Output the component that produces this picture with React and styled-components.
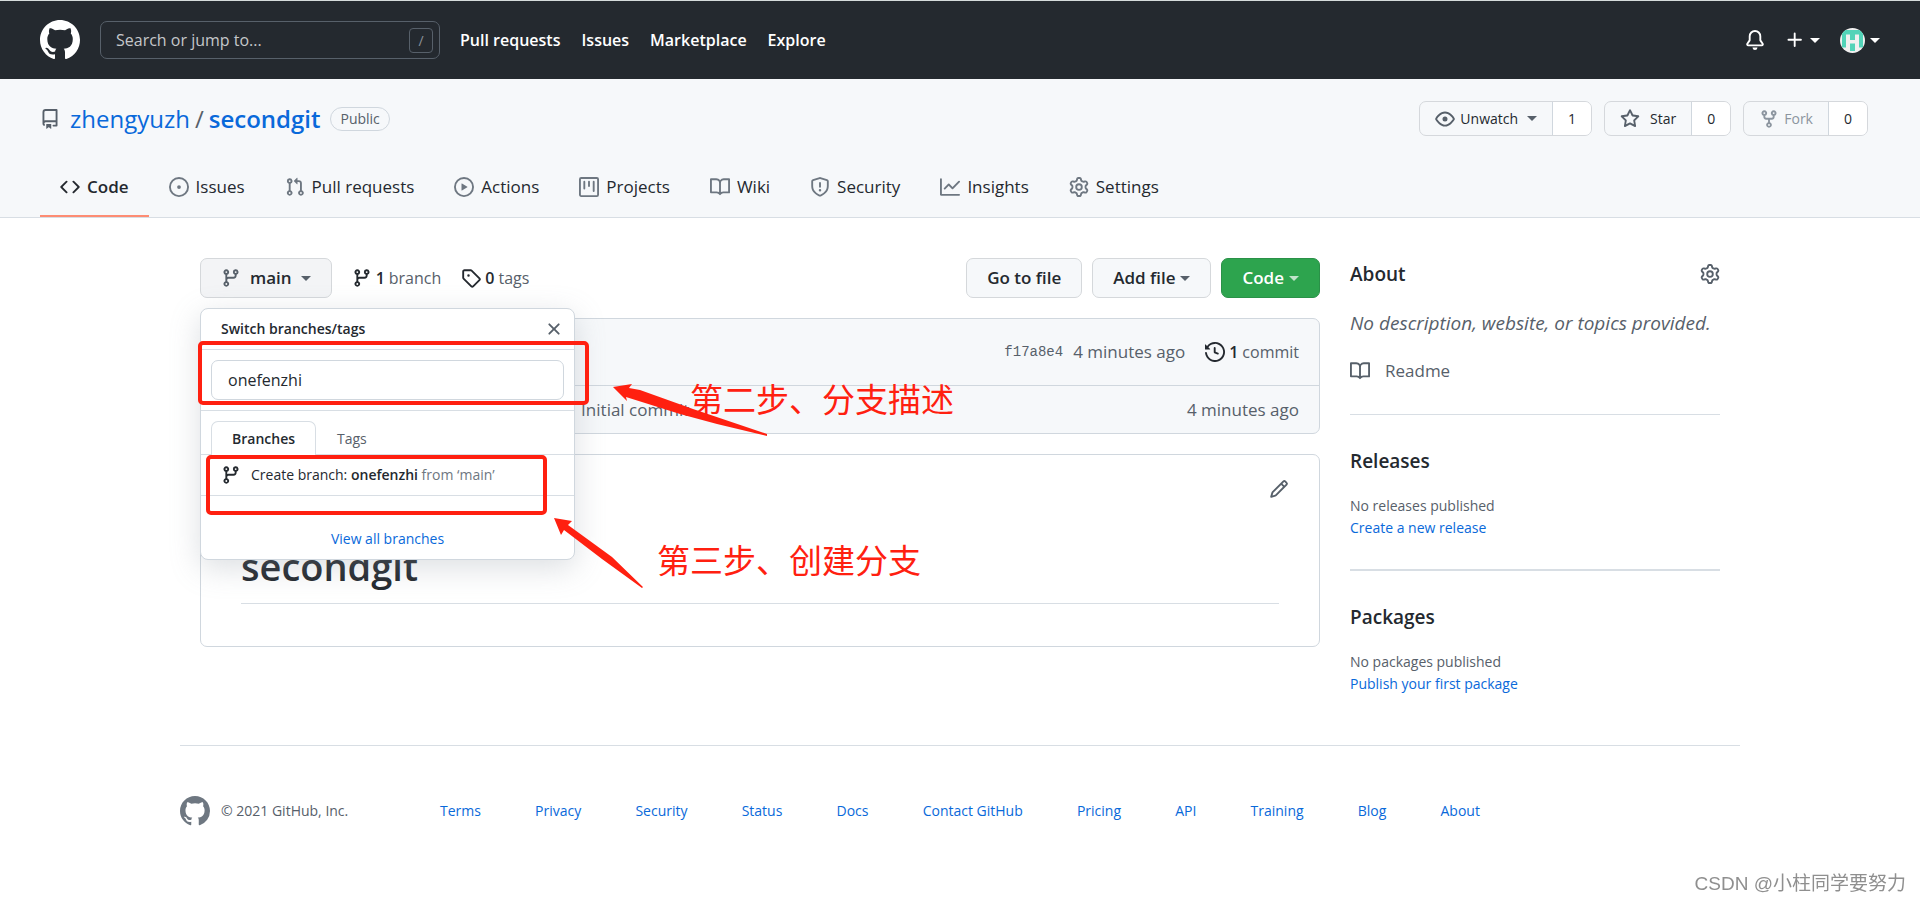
import React, { useState } from "react";
import styled, { createGlobalStyle } from "styled-components";

const paths = {
  github: "M8 0C3.58 0 0 3.58 0 8c0 3.54 2.29 6.53 5.47 7.59.4.07.55-.17.55-.38 0-.19-.01-.82-.01-1.49-2.01.37-2.53-.49-2.69-.94-.09-.23-.48-.94-.82-1.13-.28-.15-.68-.52-.01-.53.63-.01 1.08.58 1.23.82.72 1.21 1.87.87 2.33.66.07-.52.28-.87.51-1.07-1.78-.2-3.64-.89-3.64-3.95 0-.87.31-1.59.82-2.15-.08-.2-.36-1.02.08-2.12 0 0 .67-.21 2.2.82.64-.18 1.32-.27 2-.27.68 0 1.36.09 2 .27 1.53-1.04 2.2-.82 2.2-.82.44 1.1.16 1.92.08 2.12.51.56.82 1.27.82 2.15 0 3.07-1.87 3.75-3.65 3.95.29.25.54.73.54 1.48 0 1.07-.01 1.93-.01 2.2 0 .21.15.46.55.38A8.013 8.013 0 0016 8c0-4.42-3.58-8-8-8z",
  repo: "M2 2.5A2.5 2.5 0 014.5 0h8.75a.75.75 0 01.75.75v12.5a.75.75 0 01-.75.75h-2.5a.75.75 0 110-1.5h1.75v-2h-8a1 1 0 00-.714 1.7.75.75 0 01-1.072 1.05A2.495 2.495 0 012 11.5v-9zm10.5-1V9h-8c-.356 0-.694.074-1 .208V2.5a1 1 0 011-1h8zM5 12.25v3.25a.25.25 0 00.4.2l1.45-1.087a.25.25 0 01.3 0L8.6 15.7a.25.25 0 00.4-.2v-3.25a.25.25 0 00-.25-.25h-3.5a.25.25 0 00-.25.25z",
  code: "M4.72 3.22a.75.75 0 011.06 1.06L2.06 8l3.72 3.72a.75.75 0 11-1.06 1.06L.47 8.53a.75.75 0 010-1.06l4.25-4.25zm6.56 0a.75.75 0 10-1.06 1.06L13.94 8l-3.72 3.72a.75.75 0 101.06 1.06l4.25-4.25a.75.75 0 000-1.06l-4.25-4.25z",
  issue: "M8 9.5a1.5 1.5 0 100-3 1.5 1.5 0 000 3zM8 0a8 8 0 100 16A8 8 0 008 0zM1.5 8a6.5 6.5 0 1113 0 6.5 6.5 0 01-13 0z",
  pull: "M7.177 3.073L9.573.677A.25.25 0 0110 .854v4.792a.25.25 0 01-.427.177L7.177 3.427a.25.25 0 010-.354zM3.75 2.5a.75.75 0 100 1.5.75.75 0 000-1.5zm-2.25.75a2.25 2.25 0 113 2.122v5.256a2.251 2.251 0 11-1.5 0V5.372A2.25 2.25 0 011.5 3.25zM11 2.5h-1V4h1a1 1 0 011 1v5.628a2.251 2.251 0 101.5 0V5A2.5 2.5 0 0011 2.5zm1 10.25a.75.75 0 111.5 0 .75.75 0 01-1.5 0zM3.75 12a.75.75 0 100 1.5.75.75 0 000-1.5z",
  play: "M1.5 8a6.5 6.5 0 1113 0 6.5 6.5 0 01-13 0zM8 0a8 8 0 100 16A8 8 0 008 0zM6.379 5.227A.25.25 0 006 5.442v5.117a.25.25 0 00.379.214l4.264-2.559a.25.25 0 000-.428L6.379 5.227z",
  project: "M1.75 0A1.75 1.75 0 000 1.75v12.5C0 15.216.784 16 1.75 16h12.5A1.75 1.75 0 0016 14.25V1.75A1.75 1.75 0 0014.25 0H1.75zM1.5 1.75a.25.25 0 01.25-.25h12.5a.25.25 0 01.25.25v12.5a.25.25 0 01-.25.25H1.75a.25.25 0 01-.25-.25V1.75zM11.75 3a.75.75 0 00-.75.75v7.5a.75.75 0 001.5 0v-7.5a.75.75 0 00-.75-.75zm-8.25.75a.75.75 0 011.5 0v5.5a.75.75 0 01-1.5 0v-5.5zM8 3a.75.75 0 00-.75.75v3.5a.75.75 0 001.5 0v-3.5A.75.75 0 008 3z",
  book: "M0 1.75A.75.75 0 01.75 1h4.253c1.227 0 2.317.59 3 1.501A3.744 3.744 0 0111.006 1h4.245a.75.75 0 01.75.75v10.5a.75.75 0 01-.75.75h-4.507a2.25 2.25 0 00-1.591.659l-.622.621a.75.75 0 01-1.06 0l-.622-.621A2.25 2.25 0 005.258 13H.75a.75.75 0 01-.75-.75V1.75zm8.755 3a2.25 2.25 0 012.25-2.25H14.5v9h-3.757c-.71 0-1.4.201-1.992.572l.004-7.322zm-1.504 7.324l.004-5.073-.002-2.253A2.25 2.25 0 005.003 2.5H1.5v9h3.757a3.75 3.75 0 011.994.574z",
  shield: "M7.467.133a1.75 1.75 0 011.066 0l5.25 1.68A1.75 1.75 0 0115 3.48V7c0 1.566-.32 3.182-1.303 4.682-.983 1.498-2.585 2.813-5.032 3.855a1.7 1.7 0 01-1.33 0c-2.447-1.042-4.049-2.357-5.032-3.855C1.32 10.182 1 8.566 1 7V3.48a1.75 1.75 0 011.217-1.667l5.25-1.68zm.61 1.429a.25.25 0 00-.153 0l-5.25 1.68a.25.25 0 00-.174.238V7c0 1.358.275 2.666 1.057 3.86.784 1.194 2.121 2.34 4.366 3.297a.2.2 0 00.154 0c2.245-.956 3.582-2.104 4.366-3.298C13.225 9.666 13.5 8.36 13.5 7V3.48a.25.25 0 00-.174-.237l-5.25-1.68zM9 10.5a1 1 0 11-2 0 1 1 0 012 0zm-.25-5.75a.75.75 0 10-1.5 0v3a.75.75 0 001.5 0v-3z",
  graph: "M1.5 1.75a.75.75 0 00-1.5 0v12.5c0 .414.336.75.75.75h14.5a.75.75 0 000-1.5H1.5V1.75zm14.28 2.53a.75.75 0 00-1.06-1.06L10 7.94 7.53 5.47a.75.75 0 00-1.06 0L3.22 8.72a.75.75 0 001.06 1.06L7 7.06l2.47 2.47a.75.75 0 001.06 0l5.25-5.25z",
  gear: "M7.429 1.525a6.593 6.593 0 011.142 0c.036.003.108.036.137.146l.289 1.105c.147.56.55.967.997 1.189.174.086.341.183.501.29.417.278.97.423 1.53.27l1.102-.303c.11-.03.175.016.195.046.219.31.41.641.573.989.014.031.022.11-.059.19l-.815.806c-.411.406-.562.957-.53 1.456a4.588 4.588 0 010 .582c-.032.499.119 1.05.53 1.456l.815.806c.08.08.073.159.059.19a6.494 6.494 0 01-.573.99c-.02.029-.086.074-.195.045l-1.103-.303c-.559-.153-1.112-.008-1.529.27-.16.107-.327.204-.5.29-.449.222-.851.628-.998 1.189l-.289 1.105c-.029.11-.101.143-.137.146a6.613 6.613 0 01-1.142 0c-.036-.003-.108-.037-.137-.146l-.289-1.105c-.147-.56-.55-.967-.997-1.189a4.502 4.502 0 01-.501-.29c-.417-.278-.97-.423-1.53-.27l-1.102.303c-.11.03-.175-.016-.195-.046a6.492 6.492 0 01-.573-.989c-.014-.031-.022-.11.059-.19l.815-.806c.411-.406.562-.957.53-1.456a4.587 4.587 0 010-.582c.032-.499-.119-1.05-.53-1.456l-.815-.806c-.08-.08-.073-.159-.059-.19a6.44 6.44 0 01.573-.99c.02-.029.086-.075.195-.045l1.103.303c.559.153 1.112.008 1.529-.27.16-.107.327-.204.5-.29.449-.222.851-.628.998-1.189l.289-1.105c.029-.11.101-.143.137-.146zM8 0c-.236 0-.47.01-.701.03-.743.065-1.29.615-1.458 1.261l-.29 1.106c-.017.066-.078.158-.211.224a5.994 5.994 0 00-.668.386c-.123.082-.233.09-.3.071L3.27 2.776c-.644-.177-1.392.02-1.82.63a7.977 7.977 0 00-.704 1.217c-.315.675-.111 1.422.363 1.891l.815.806c.05.048.098.147.088.294a6.084 6.084 0 000 .772c.01.147-.038.246-.088.294l-.815.806c-.474.469-.678 1.216-.363 1.891.2.428.436.835.704 1.218.428.609 1.176.806 1.82.63l1.103-.303c.066-.019.176-.011.299.071.213.143.436.272.668.386.133.066.194.158.212.224l.289 1.106c.169.646.715 1.196 1.458 1.26a8.094 8.094 0 001.402 0c.743-.064 1.29-.614 1.458-1.26l.29-1.106c.017-.066.078-.158.211-.224a5.98 5.98 0 00.668-.386c.123-.082.233-.09.3-.071l1.102.302c.644.177 1.392-.02 1.82-.63.268-.382.505-.789.704-1.217.315-.675.111-1.422-.364-1.891l-.814-.806c-.05-.048-.098-.147-.088-.294a6.1 6.1 0 000-.772c-.01-.147.039-.246.088-.294l.814-.806c.475-.469.679-1.216.364-1.891a7.992 7.992 0 00-.704-1.218c-.428-.609-1.176-.806-1.82-.63l-1.103.303c-.066.019-.176.011-.299-.071a5.991 5.991 0 00-.668-.386c-.133-.066-.194-.158-.212-.224L10.16 1.29C9.99.645 9.444.095 8.701.031A8.094 8.094 0 008 0zm1.5 8a1.5 1.5 0 11-3 0 1.5 1.5 0 013 0zM11 8a3 3 0 11-6 0 3 3 0 016 0z",
  branch: "M11.75 2.5a.75.75 0 100 1.5.75.75 0 000-1.5zm-2.25.75a2.25 2.25 0 113 2.122V6A2.5 2.5 0 0110 8.5H6a1 1 0 00-1 1v1.128a2.251 2.251 0 11-1.5 0V5.372a2.25 2.25 0 111.5 0v1.836A2.492 2.492 0 016 7h4a1 1 0 001-1v-.628A2.25 2.25 0 019.5 3.25zM4.25 12a.75.75 0 100 1.5.75.75 0 000-1.5zM3.5 3.25a.75.75 0 111.5 0 .75.75 0 01-1.5 0z",
  tag: "M2.5 7.775V2.75a.25.25 0 01.25-.25h5.025a.25.25 0 01.177.073l6.25 6.25a.25.25 0 010 .354l-5.025 5.025a.25.25 0 01-.354 0l-6.25-6.25a.25.25 0 01-.073-.177zm-1.5 0V2.75C1 1.784 1.784 1 2.75 1h5.025c.464 0 .91.184 1.238.513l6.25 6.25a1.75 1.75 0 010 2.474l-5.026 5.026a1.75 1.75 0 01-2.474 0l-6.25-6.25A1.75 1.75 0 011 7.775zM6 5a1 1 0 100 2 1 1 0 000-2z",
  eye: "M1.679 7.932c.412-.621 1.242-1.75 2.366-2.717C5.175 4.242 6.527 3.5 8 3.5c1.473 0 2.824.742 3.955 1.715 1.124.967 1.954 2.096 2.366 2.717a.119.119 0 010 .136c-.412.621-1.242 1.75-2.366 2.717C10.825 11.758 9.473 12.5 8 12.5c-1.473 0-2.824-.742-3.955-1.715C2.92 9.818 2.09 8.69 1.679 8.068a.119.119 0 010-.136zM8 2c-1.981 0-3.67.992-4.933 2.078C1.797 5.169.88 6.423.43 7.1a1.619 1.619 0 000 1.798c.45.678 1.367 1.932 2.637 3.024C4.329 13.008 6.019 14 8 14c1.981 0 3.67-.992 4.933-2.078 1.27-1.091 2.187-2.345 2.637-3.023a1.619 1.619 0 000-1.798c-.45-.678-1.367-1.932-2.637-3.023C11.671 2.992 9.981 2 8 2zm0 8a2 2 0 100-4 2 2 0 000 4z",
  star: "M8 .25a.75.75 0 01.673.418l1.882 3.815 4.21.612a.75.75 0 01.416 1.279l-3.046 2.97.719 4.192a.75.75 0 01-1.088.791L8 12.347l-3.766 1.98a.75.75 0 01-1.088-.79l.72-4.194L.818 6.374a.75.75 0 01.416-1.28l4.21-.611L7.327.668A.75.75 0 018 .25zm0 2.445L6.615 5.5a.75.75 0 01-.564.41l-3.097.45 2.24 2.184a.75.75 0 01.216.664l-.528 3.084 2.769-1.456a.75.75 0 01.698 0l2.77 1.456-.53-3.084a.75.75 0 01.216-.664l2.24-2.183-3.096-.45a.75.75 0 01-.564-.41L8 2.694v.001z",
  fork: "M5 3.25a.75.75 0 11-1.5 0 .75.75 0 011.5 0zm0 2.122a2.25 2.25 0 10-1.5 0v.878A2.25 2.25 0 005.75 8.5h1.5v2.128a2.251 2.251 0 101.5 0V8.5h1.5a2.25 2.25 0 002.25-2.25v-.878a2.25 2.25 0 10-1.5 0v.878a.75.75 0 01-.75.75h-4.5A.75.75 0 015 6.25v-.878zm3.75 7.378a.75.75 0 11-1.5 0 .75.75 0 011.5 0zm3-8.75a.75.75 0 100-1.5.75.75 0 000 1.5z",
  bell: "M8 16a2 2 0 001.985-1.75c.017-.137-.097-.25-.235-.25h-3.5c-.138 0-.252.113-.235.25A2 2 0 008 16zM8 1.5A3.5 3.5 0 004.5 5v2.947c0 .346-.102.683-.294.97l-1.703 2.556a.018.018 0 00-.003.01l.001.006c0 .002.002.004.004.006a.017.017 0 00.006.004l.007.001h10.964l.007-.001a.016.016 0 00.006-.004.016.016 0 00.004-.006l.001-.007a.017.017 0 00-.003-.01l-1.703-2.554a1.75 1.75 0 01-.294-.97V5A3.5 3.5 0 008 1.5zM3 5a5 5 0 0110 0v2.947c0 .05.015.098.042.139l1.703 2.555A1.518 1.518 0 0113.482 13H2.518a1.518 1.518 0 01-1.263-2.36l1.703-2.554A.25.25 0 003 7.947V5z",
  plus: "M7.75 2a.75.75 0 01.75.75V7h4.25a.75.75 0 110 1.5H8.5v4.25a.75.75 0 11-1.5 0V8.5H2.75a.75.75 0 010-1.5H7V2.75A.75.75 0 017.75 2z",
  close: "M3.72 3.72a.75.75 0 011.06 0L8 6.94l3.22-3.22a.75.75 0 111.06 1.06L9.06 8l3.22 3.22a.75.75 0 11-1.06 1.06L8 9.06l-3.22 3.22a.75.75 0 01-1.06-1.06L6.94 8 3.72 4.78a.75.75 0 010-1.06z",
  history: "M1.643 3.143L.427 1.927A.25.25 0 000 2.104V5.75c0 .138.112.25.25.25h3.646a.25.25 0 00.177-.427L2.715 4.215a6.5 6.5 0 11-1.18 4.458.75.75 0 10-1.493.154 8.001 8.001 0 101.6-5.684zM7.75 4a.75.75 0 01.75.75v2.992l2.028.812a.75.75 0 01-.557 1.392l-2.5-1A.75.75 0 017 8.25v-3.5A.75.75 0 017.75 4z",
  pencil: "M11.013 1.427a1.75 1.75 0 012.474 0l1.086 1.086a1.75 1.75 0 010 2.474l-8.61 8.61c-.21.21-.47.364-.756.445l-3.251.93a.75.75 0 01-.927-.928l.929-3.25a1.75 1.75 0 01.445-.758l8.61-8.61zm1.414 1.06a.25.25 0 00-.354 0L10.811 3.75l1.439 1.44 1.263-1.263a.25.25 0 000-.354l-1.086-1.086zM11.189 6.25L9.75 4.81l-6.286 6.287a.25.25 0 00-.064.108l-.558 1.953 1.953-.558a.249.249 0 00.108-.064l6.286-6.286z",
};

const Icon = ({ name, size = 20 }) => (
  <Svg viewBox="0 0 16 16" width={size} height={size} aria-hidden="true">
    <path fillRule="evenodd" d={paths[name]} />
  </Svg>
);

const navLinks = ["Pull requests", "Issues", "Marketplace", "Explore"];

const repoTabs = [
  { icon: "code", label: "Code" },
  { icon: "issue", label: "Issues" },
  { icon: "pull", label: "Pull requests" },
  { icon: "play", label: "Actions" },
  { icon: "project", label: "Projects" },
  { icon: "book", label: "Wiki" },
  { icon: "shield", label: "Security" },
  { icon: "graph", label: "Insights" },
  { icon: "gear", label: "Settings" },
];

const footerLinks = [
  "Terms",
  "Privacy",
  "Security",
  "Status",
  "Docs",
  "Contact GitHub",
  "Pricing",
  "API",
  "Training",
  "Blog",
  "About",
];

const Header = () => (
  <TopBar>
    <HomeLink href="#" aria-label="Homepage">
      <Icon name="github" size={40} />
    </HomeLink>
    <SearchBox>
      <input type="text" placeholder="Search or jump to..." aria-label="Search or jump to" />
      <kbd>/</kbd>
    </SearchBox>
    <TopNav>
      {navLinks.map(link => <a href="#" key={link}>{link}</a>)}
    </TopNav>
    <UserMenu>
      <button type="button" aria-label="Notifications"><Icon name="bell" /></button>
      <button type="button" aria-label="Create new"><Icon name="plus" /><Caret /></button>
      <button type="button" aria-label="Account"><Avatar /><Caret /></button>
    </UserMenu>
  </TopBar>
);

const Avatar = () => (
  <svg width="25" height="25" viewBox="0 0 25 25" aria-hidden="true">
    <clipPath id="avatar"><circle cx="12.5" cy="12.5" r="12.5" /></clipPath>
    <g clipPath="url(#avatar)">
      <rect width="25" height="25" fill="#f0f0f0" />
      <path fill="#52d3b8" d="M2 2h21v17.500h-4V6.500h-4v5.500h-5V6.500H6v13H2zM10 15.500h5V23h-5z" />
    </g>
  </svg>
);

const RepoHeader = () => (
  <RepoHead>
    <RepoTop>
      <RepoTitle>
        <Icon name="repo" />
        <a href="#">zhengyuzh</a>
        <span>/</span>
        <a href="#"><strong>secondgit</strong></a>
        <Pill>Public</Pill>
      </RepoTitle>
      <RepoActions>
        <SocialButton>
          <button type="button"><Icon name="eye" />Unwatch<Caret /></button>
          <a href="#">1</a>
        </SocialButton>
        <SocialButton $space="10px">
          <button type="button"><Icon name="star" />Star</button>
          <a href="#">0</a>
        </SocialButton>
        <SocialButton>
          <button type="button" disabled><Icon name="fork" />Fork</button>
          <a href="#">0</a>
        </SocialButton>
      </RepoActions>
    </RepoTop>
    <RepoNav>
      {repoTabs.map(({ icon, label }, i) => (
        <RepoTab href="#" key={label} $active={i === 0}>
          <Icon name={icon} />
          {label}
        </RepoTab>
      ))}
    </RepoNav>
  </RepoHead>
);

const BranchMenu = () => {
  const [query, setQuery] = useState("onefenzhi");
  return (
    <Menu>
      <MenuHeader>
        Switch branches/tags
        <button type="button" aria-label="Close menu"><Icon name="close" /></button>
      </MenuHeader>
      <MenuFilter>
        <input
          type="text"
          aria-label="Find or create a branch"
          value={query}
          onChange={e => setQuery(e.target.value)}
        />
      </MenuFilter>
      <MenuTabs>
        <MenuTab type="button" $active>Branches</MenuTab>
        <MenuTab type="button">Tags</MenuTab>
      </MenuTabs>
      <CreateBranch type="button">
        <Icon name="branch" />
        <span>Create branch: <b>{query}</b> <small>from ‘main’</small></span>
      </CreateBranch>
      <MenuFooter><a href="#">View all branches</a></MenuFooter>
      <Highlight $top={32} $left={-3} $width={391} $height={64} />
      <Highlight $top={146} $left={5} $width={341} $height={60} />
    </Menu>
  );
};

const Notes = () => (
  <>
    <Arrow width="180" height="60" viewBox="600 380 180 60" aria-hidden="true">
      <path d="M613 387L632 384L629 388L640 390L693 409L767 434L767 436L717 424L680 414L626 397L627 401Z" />
    </Arrow>
    <ArrowTwo width="100" height="80" viewBox="550 514 100 80" aria-hidden="true">
      <path d="M554 518L572 521L568 525L612 557L643 587L642 588L602 559L564 530L561 535Z" />
    </ArrowTwo>
    <Note $top={118} $left={490}>第二步、分支描述</Note>
    <Note $top={279} $left={457}>第三步、创建分支</Note>
  </>
);

const App = () => (
  <>
    <GlobalStyle />
    <Header />
    <RepoHeader />
    <Container>
      <Main>
        <Toolbar>
          <Button type="button" $pressed>
            <Icon name="branch" />
            <b>main</b>
            <Caret />
          </Button>
          <Stat href="#"><Icon name="branch" /><strong>1</strong> branch</Stat>
          <Stat href="#"><Icon name="tag" /><strong>0</strong> tags</Stat>
          <ToolbarRight>
            <Button type="button">Go to file</Button>
            <Button type="button">Add file<Caret /></Button>
            <Button type="button" $primary>Code<Caret /></Button>
          </ToolbarRight>
        </Toolbar>
        <FileBox>
          <CommitBar>
            <code>f17a8e4</code>
            <span>4 minutes ago</span>
            <Stat href="#"><Icon name="history" /><strong>1</strong> commit</Stat>
          </CommitBar>
          <FileTable>
            <tbody>
              <tr>
                <td />
                <td>Initial commit</td>
                <td>4 minutes ago</td>
              </tr>
            </tbody>
          </FileTable>
        </FileBox>
        <Readme>
          <button type="button" aria-label="Edit readme"><Icon name="pencil" /></button>
          <h1>secondgit</h1>
        </Readme>
        <BranchMenu />
        <Notes />
      </Main>
      <Sidebar>
        <section>
          <SideTitle>
            About
            <button type="button" aria-label="Edit details"><Icon name="gear" /></button>
          </SideTitle>
          <Description>No description, website, or topics provided.</Description>
          <ReadmeLink href="#"><Icon name="book" />Readme</ReadmeLink>
        </section>
        <section>
          <SideTitle>Releases</SideTitle>
          <p>No releases published</p>
          <a href="#">Create a new release</a>
        </section>
        <section>
          <SideTitle>Packages</SideTitle>
          <p>No packages published</p>
          <a href="#">Publish your first package</a>
        </section>
      </Sidebar>
    </Container>
    <Footer>
      <Copyright><Icon name="github" size={30} />© 2021 GitHub, Inc.</Copyright>
      <FooterNav>
        {footerLinks.map(link => <a href="#" key={link}>{link}</a>)}
      </FooterNav>
    </Footer>
    <Watermark>CSDN @小柱同学要努力</Watermark>
  </>
);

const GlobalStyle = createGlobalStyle`
  * {
    box-sizing: border-box;
  }
  body {
    margin: 0;
    border-top: 1px solid #d5dbdb;
    background: #fff;
    color: #24292f;
    font-family: "Open Sans", "Noto Sans CJK SC", sans-serif;
    font-size: 17px;
    line-height: 26px;
  }
  a {
    color: #0969da;
    text-decoration: none;
  }
  button, input {
    font: inherit;
    color: inherit;
  }
  button {
    border: 0;
    padding: 0;
    background: none;
    cursor: pointer;
  }
  strong, b {
    font-weight: 600;
  }
`;

const Svg = styled.svg`
  display: block;
  flex-shrink: 0;
  fill: currentColor;
`;

const Caret = styled.span`
  border: 5px solid transparent;
  border-top-color: currentColor;
  border-bottom: 0;
`;

const TopBar = styled.header`
  display: flex;
  align-items: center;
  height: 78px;
  padding: 0 40px;
  background: #24292f;
  color: #fff;
`;

const HomeLink = styled.a`
  color: #fff;
  margin-right: 20px;
`;

const SearchBox = styled.div`
  display: flex;
  align-items: center;
  width: 340px;
  height: 38px;
  padding: 0 6px 0 15px;
  border: 1px solid #57606a;
  border-radius: 7px;
  input {
    flex: 1;
    min-width: 0;
    padding: 0;
    border: 0;
    outline: 0;
    background: none;
    font-size: 16px;
  }
  input::placeholder {
    color: #c4c7ca;
  }
  kbd {
    width: 24px;
    height: 25px;
    border: 1px solid #57606a;
    border-radius: 4px;
    color: #8b9198;
    font-family: inherit;
    font-size: 14px;
    line-height: 23px;
    text-align: center;
  }
`;

const TopNav = styled.nav`
  display: flex;
  gap: 21px;
  margin-left: 20px;
  a {
    color: #fff;
    font-size: 16px;
    font-weight: 600;
  }
`;

const UserMenu = styled.div`
  display: flex;
  align-items: center;
  gap: 20px;
  margin-left: auto;
  button {
    display: flex;
    align-items: center;
    gap: 5px;
  }
`;

const RepoHead = styled.div`
  padding-top: 22px;
  background: #f6f8fa;
  border-bottom: 1px solid #d8dee4;
`;

const RepoTop = styled.div`
  display: flex;
  justify-content: space-between;
  padding: 0 52px 0 40px;
`;

const RepoTitle = styled.div`
  display: flex;
  align-items: center;
  height: 36px;
  font-size: 24px;
  color: #57606a;
  svg {
    margin-right: 10px;
  }
  span {
    margin: 0 5px;
  }
`;

const Pill = styled.em`
  margin-left: 10px;
  padding: 0 9px;
  border: 1px solid #d0d7de;
  border-radius: 20px;
  font-size: 14px;
  font-style: normal;
  font-weight: 500;
  line-height: 22px;
`;

const RepoActions = styled.div`
  display: flex;
  gap: 12px;
`;

const SocialButton = styled.div`
  display: flex;
  height: 35px;
  border: 1px solid #d5d8dc;
  border-radius: 7px;
  background: #f6f8fa;
  font-size: 14px;
  font-weight: 500;
  overflow: hidden;
  button {
    display: flex;
    align-items: center;
    gap: ${props => props.$space || "5px"};
    padding: 0 15px;
  }
  svg {
    color: #57606a;
  }
  button:disabled, button:disabled svg {
    color: #8c959f;
  }
  ${Caret} {
    margin-left: 4px;
    color: #57606a;
  }
  a {
    display: flex;
    align-items: center;
    padding: 0 15px;
    border-left: 1px solid #d0d7de;
    background: #fff;
    color: #24292f;
  }
`;

const RepoNav = styled.nav`
  display: flex;
  margin-top: 21px;
  padding: 0 40px;
`;

const RepoTab = styled.a`
  display: flex;
  align-items: center;
  gap: 7px;
  height: 59px;
  padding: 0 20px;
  border-bottom: 2px solid ${props => (props.$active ? "#fd8c73" : "transparent")};
  color: #24292f;
  font-size: 17px;
  font-weight: ${props => (props.$active ? 600 : 400)};
  svg {
    color: ${props => (props.$active ? "#24292f" : "#6e7781")};
  }
`;

const Container = styled.div`
  display: grid;
  grid-template-columns: minmax(0, 1fr) 370px;
  gap: 30px;
  max-width: 1600px;
  margin: 0 auto;
  padding: 40px 40px 50px;
`;

const Main = styled.main`
  position: relative;
`;

const Toolbar = styled.div`
  display: flex;
  align-items: center;
  gap: 20px;
  margin-bottom: 20px;
`;

const ToolbarRight = styled.div`
  display: flex;
  gap: 10px;
  margin-left: auto;
`;

const Button = styled.button`
  display: flex;
  align-items: center;
  gap: 5px;
  height: 40px;
  padding: 0 20px;
  border: 1px solid ${props => (props.$primary ? "#2a9148" : "#d5d8db")};
  border-radius: 7px;
  background: ${props => (props.$primary ? "#2da44e" : props.$pressed ? "#f3f4f6" : "#f6f8fa")};
  color: ${props => (props.$primary ? "#fff" : "#24292f")};
  font-weight: 600;
  svg {
    color: #57606a;
  }
  b {
    margin: 0 4px;
  }
  ${Caret} {
    color: ${props => (props.$primary ? "#c0e4ca" : "#57606a")};
  }
`;

const Stat = styled.a`
  display: flex;
  align-items: center;
  gap: 4px;
  color: #57606a;
  font-size: 16px;
  svg, strong {
    color: #24292f;
  }
`;

const FileBox = styled.div`
  border: 1px solid #d0d7de;
  border-radius: 7px;
  background: #f6f8fa;
  color: #57606a;
`;

const CommitBar = styled.div`
  display: flex;
  align-items: center;
  justify-content: flex-end;
  height: 67px;
  padding: 0 20px;
  border-bottom: 1px solid #d0d7de;
  code {
    margin-right: 10px;
    font-family: "Liberation Mono", monospace;
    font-size: 14px;
  }
  span {
    margin-right: 20px;
  }
`;

const FileTable = styled.table`
  width: 100%;
  height: 47px;
  border-collapse: collapse;
  td {
    padding: 0;
  }
  td:first-child {
    width: 34%;
  }
  td:last-child {
    padding-right: 20px;
    text-align: right;
  }
`;

const Readme = styled.article`
  margin-top: 20px;
  padding: 24px 40px 42px;
  border: 1px solid #d0d7de;
  border-radius: 7px;
  button {
    display: block;
    margin: 0 -10px 0 auto;
    color: #57606a;
  }
  h1 {
    margin: 42px 0 0;
    padding-bottom: 12px;
    border-bottom: 1px solid #d8dee4;
    font-size: 38px;
    font-weight: 600;
    line-height: 50px;
  }
`;

const Menu = styled.div`
  position: absolute;
  top: 50px;
  left: 0;
  width: 375px;
  border: 1px solid #d0d7de;
  border-radius: 8px;
  background: #fff;
  box-shadow: 0 8px 30px rgba(140, 149, 159, 0.3);
  font-size: 14px;
`;

const MenuHeader = styled.div`
  display: flex;
  align-items: center;
  justify-content: space-between;
  height: 41px;
  padding: 0 10px 0 20px;
  border-bottom: 1px solid #d8dee4;
  font-weight: 600;
  button {
    color: #57606a;
  }
`;

const MenuFilter = styled.div`
  padding: 10px;
  border-bottom: 1px solid #d8dee4;
  input {
    display: block;
    width: 100%;
    height: 40px;
    padding: 0 16px;
    border: 1px solid #d0d7de;
    border-radius: 7px;
    font-size: 16px;
  }
`;

const MenuTabs = styled.div`
  display: flex;
  padding: 10px 10px 0;
  border-bottom: 1px solid #d8dee4;
`;

const MenuTab = styled.button`
  height: 34px;
  margin-bottom: -1px;
  padding: 0 20px;
  border: 1px solid ${props => (props.$active ? "#d8dee4" : "transparent")};
  border-bottom: 0;
  border-radius: 7px 7px 0 0;
  background: ${props => (props.$active ? "#fff" : "none")};
  color: ${props => (props.$active ? "#24292f" : "#57606a")};
  font-weight: ${props => (props.$active ? 600 : 500)};
`;

const CreateBranch = styled.button`
  display: flex;
  align-items: center;
  gap: 10px;
  width: 100%;
  height: 41px;
  padding: 0 20px;
  border-bottom: 1px solid #d8dee4;
  font-weight: 500;
  small {
    color: #6e7781;
    font-size: 14px;
    font-weight: 400;
  }
`;

const MenuFooter = styled.div`
  padding: 30px 0 7px;
  text-align: center;
`;

const Highlight = styled.div`
  position: absolute;
  top: ${props => props.$top}px;
  left: ${props => props.$left}px;
  width: ${props => props.$width}px;
  height: ${props => props.$height}px;
  border: 4px solid #ff2010;
  border-radius: 5px;
  pointer-events: none;
`;

const Arrow = styled.svg`
  position: absolute;
  top: 122px;
  left: 400px;
  fill: #ff2010;
  pointer-events: none;
`;

const ArrowTwo = styled(Arrow)`
  top: 256px;
  left: 350px;
`;

const Note = styled.div`
  position: absolute;
  top: ${props => props.$top}px;
  left: ${props => props.$left}px;
  color: #ff2010;
  font-family: "Noto Sans CJK SC", sans-serif;
  font-size: 33px;
  line-height: 44px;
  white-space: nowrap;
`;

const Sidebar = styled.aside`
  font-size: 14px;
  line-height: 22px;
  section + section {
    margin-top: 30px;
    padding-top: 30px;
    border-top: 1px solid #d8dee4;
  }
  section:last-child {
    border-top-width: 2px;
  }
  p {
    margin: 0;
    color: #57606a;
  }
`;

const SideTitle = styled.h2`
  display: flex;
  align-items: center;
  justify-content: space-between;
  margin: 0 0 18px;
  font-size: 19px;
  font-weight: 600;
  line-height: 32px;
  button {
    color: #57606a;
  }
`;

const Description = styled.p`
  font-size: 19px;
  font-style: italic;
  line-height: 30px;
`;

const ReadmeLink = styled.a`
  display: flex;
  align-items: center;
  gap: 15px;
  margin-top: 20px;
  color: #57606a;
  font-size: 17px;
  line-height: 26px;
`;

const Footer = styled.footer`
  display: flex;
  align-items: center;
  justify-content: space-between;
  max-width: 1560px;
  margin: 0 auto;
  padding: 50px 260px 50px 0;
  border-top: 1px solid #d8dee4;
  font-size: 14px;
`;

const Copyright = styled.div`
  display: flex;
  align-items: center;
  gap: 11px;
  width: 260px;
  color: #57606a;
  svg {
    color: #6e7781;
  }
`;

const FooterNav = styled.nav`
  display: flex;
  flex: 1;
  justify-content: space-between;
`;

const Watermark = styled.div`
  position: fixed;
  right: 14px;
  bottom: 4px;
  color: #8f8f8f;
  font-family: "Liberation Sans", "Noto Sans CJK SC", sans-serif;
  font-size: 19px;
  line-height: 28px;
`;

export default App;
